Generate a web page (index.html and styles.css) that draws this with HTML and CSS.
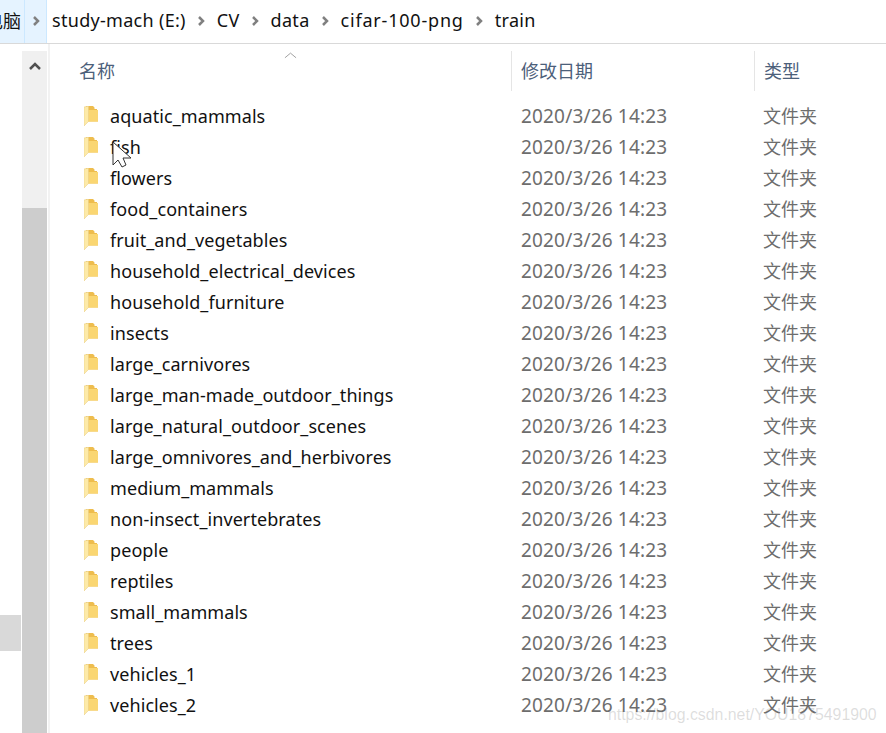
FILE: index.html
```html
<!DOCTYPE html>
<html lang="zh-CN">
<head>
    <meta charset="UTF-8">
    <title>train</title>
    <link rel="stylesheet" href="styles.css">
</head>
<body>
    <div class="address-bar">
        <div class="crumb-root"><span class="crumb-root-text">电脑</span></div>
        <div class="crumb-arrow-box">
            <svg class="crumb-arrow" viewBox="0 0 8 12"><path d="M2 2l4 4-4 4"/></svg>
        </div>
        <span class="crumb first">study-mach (E:)</span>
        <svg class="crumb-arrow" viewBox="0 0 8 12"><path d="M2 2l4 4-4 4"/></svg>
        <span class="crumb">CV</span>
        <svg class="crumb-arrow" viewBox="0 0 8 12"><path d="M2 2l4 4-4 4"/></svg>
        <span class="crumb">data</span>
        <svg class="crumb-arrow" viewBox="0 0 8 12"><path d="M2 2l4 4-4 4"/></svg>
        <span class="crumb wide">cifar-100-png</span>
        <svg class="crumb-arrow" viewBox="0 0 8 12"><path d="M2 2l4 4-4 4"/></svg>
        <span class="crumb">train</span>
    </div>

    <div class="main">
        <div class="nav-pane">
            <div class="nav-items">
                <div class="nav-selected"></div>
            </div>
            <div class="scrollbar">
                <div class="scroll-track">
                    <svg class="scroll-up" viewBox="0 0 14 10"><path d="M2 8l5-5 5 5"/></svg>
                </div>
                <div class="scroll-thumb"></div>
            </div>
        </div>

        <div class="file-pane">
            <div class="header-row">
                <div class="col-name header-cell">名称
                    <svg class="sort-caret" viewBox="0 0 14 8"><path d="M1 7l6-5 6 5"/></svg>
                </div>
                <div class="col-date header-cell">修改日期</div>
                <div class="col-type header-cell">类型</div>
            </div>
            <div id="rows" class="rows"></div>
        </div>
    </div>

    <svg class="mouse-cursor" viewBox="0 0 20 27">
        <path d="M1 1v23l5-5 4 7 4-2-3-7h8z"/>
    </svg>
    <div class="watermark">https://blog.csdn.net/YOU1875491900</div>

    <script src="script.js"></script>
</body>
</html>
```

FILE: styles.css
```css
body {
    margin: 0;
    width: 886px;
    height: 733px;
    overflow: hidden;
    background-color: white;
    font-family: "Noto Sans", "Noto Sans CJK SC", sans-serif;
    font-size: 18px;
    position: relative;
}
.address-bar {
    display: flex;
    align-items: center;
    height: 43px;
    border-bottom: 1px solid #d9d9d9;
    color: #111;
}
.crumb-root {
    width: 25px;
    height: 43px;
    background-color: #e5f3ff;
    border-right: 1px solid #cce8ff;
    display: flex;
    align-items: center;
    justify-content: flex-end;
    overflow: hidden;
    box-sizing: border-box;
    flex: none;
}
.crumb-root-text {
    font-family: "Noto Sans CJK SC", sans-serif;
    margin-right: 3px;
    margin-top: -3px;
    white-space: nowrap;
    flex: none;
}
.crumb-arrow-box {
    width: 22px;
    height: 43px;
    box-sizing: border-box;
    background-color: #e5f3ff;
    border-right: 1px solid #cce8ff;
    display: flex;
    align-items: center;
    justify-content: center;
}
.crumb-arrow {
    width: 8px;
    height: 12px;
    flex: none;
    fill: none;
    stroke: #808080;
    stroke-width: 2.5;
    margin-top: -2px;
}
.crumb {
    margin: 0 11.5px;
    margin-top: -4px;
    white-space: nowrap;
    letter-spacing: .3px;
}
.crumb.first {
    margin-left: 5px;
}
.crumb.wide {
    letter-spacing: .8px;
}
.main {
    display: flex;
    height: 689px;
}
.nav-pane {
    display: flex;
    width: 50px;
    box-sizing: border-box;
    border-right: 2px solid #f2f2f2;
}
.nav-items {
    width: 22px;
    padding-top: 571px;
}
.nav-selected {
    width: 21px;
    height: 36px;
    background-color: #d9d9d9;
}
.scrollbar {
    width: 25px;
    margin-top: 7px;
    display: flex;
    flex-direction: column;
}
.scroll-track {
    height: 157px;
    background-color: #f0f0f0;
    display: flex;
    justify-content: center;
}
.scroll-up {
    width: 14px;
    height: 10px;
    margin-top: 10px;
    fill: none;
    stroke: #505050;
    stroke-width: 2.5;
}
.scroll-thumb {
    flex: 1;
    background-color: #cdcdcd;
}
.file-pane {
    flex: 1;
}
.header-row {
    display: flex;
    height: 40px;
    margin-top: 7px;
    color: #4c607a;
}
.header-cell {
    height: 40px;
    line-height: 38px;
    box-sizing: border-box;
    position: relative;
    font-family: "Noto Sans CJK SC", sans-serif;
}
.col-name {
    width: 461px;
    padding-left: 29px;
    flex: none;
}
.col-date {
    width: 243px;
    padding-left: 10px;
    flex: none;
}
.col-type {
    padding-left: 9px;
    flex: 1;
}
.header-row .col-date,
.header-row .col-type {
    border-left: 1px solid #e5e5e5;
    padding-left: 9px;
}
.sort-caret {
    position: absolute;
    left: 234px;
    top: 0;
    width: 13px;
    height: 8px;
    fill: none;
    stroke: #9a9a9a;
    stroke-width: 1;
}
.rows {
    padding-top: 9px;
}
.row {
    display: flex;
    align-items: center;
    height: 31px;
}
.row .col-name {
    display: flex;
    align-items: center;
    padding-left: 34px;
    color: #111;
    box-sizing: border-box;
    letter-spacing: .08px;
}
.row .col-date {
    color: #6d6d6d;
    box-sizing: border-box;
    font-size: 19px;
    letter-spacing: .17px;
}
.row .col-type {
    color: #6d6d6d;
    font-family: "Noto Sans CJK SC", sans-serif;
    margin-top: -2px;
}
.folder-icon {
    width: 14px;
    height: 20px;
    margin-right: 12px;
    flex: none;
}
.mouse-cursor {
    position: absolute;
    left: 112px;
    top: 141px;
    width: 20px;
    height: 27px;
    fill: white;
    stroke: #333;
    stroke-width: 1;
}
.watermark {
    position: absolute;
    left: 608px;
    top: 706px;
    font-family: "Liberation Sans", sans-serif;
    font-size: 15.85px;
    color: rgba(120, 120, 120, 0.25);
    white-space: nowrap;
}
```

FILE: script.js
```js
const folders = [
    "aquatic_mammals", "fish", "flowers", "food_containers", "fruit_and_vegetables",
    "household_electrical_devices", "household_furniture", "insects", "large_carnivores",
    "large_man-made_outdoor_things", "large_natural_outdoor_scenes",
    "large_omnivores_and_herbivores", "medium_mammals", "non-insect_invertebrates",
    "people", "reptiles", "small_mammals", "trees", "vehicles_1", "vehicles_2"
];

const folderIcon = `<svg class="folder-icon" viewBox="0 0 14 20">
    <path d="M2 0h7l1.500 1.500V3H13v10h1v2.500H2z" fill="#eebd4e"/>
    <path d="M4 4h10v11.500H4z" fill="#fad672"/>
    <path d="M0 1l4.500-1v15.500L0 20z" fill="#fdeaa8" stroke="#e6ca80" stroke-width=".5"/>
</svg>`;

const rows = document.getElementById("rows");
folders.forEach(name => {
    const row = document.createElement("div");
    row.className = "row";
    row.innerHTML = `<div class="col-name">${folderIcon}${name}</div>
        <div class="col-date">2020/3/26 14:23</div>
        <div class="col-type">文件夹</div>`;
    rows.appendChild(row);
});
```
